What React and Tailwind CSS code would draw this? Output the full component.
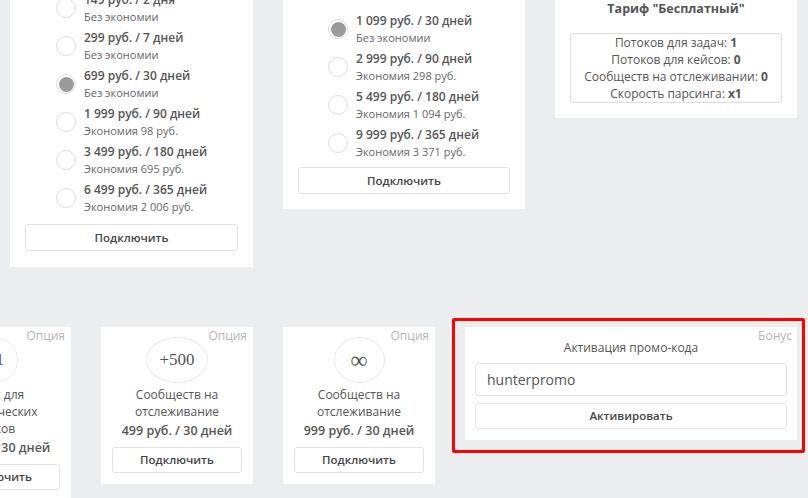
import React from "react";

function Radio({ checked }) {
  return (
    <div className="w-[20px] h-[20px] shrink-0 rounded-full border border-[#dcdcdc] bg-white flex items-center justify-center">
      {checked && <div className="w-[15px] h-[15px] rounded-full bg-[#9b9b9b]" />}
    </div>
  );
}

function Row({ title, sub, checked }) {
  return (
    <div className="flex items-center gap-[8px] h-[34px] mb-[4px]">
      <Radio checked={checked} />
      <div className="flex flex-col">
        <div className="leading-[18px] text-[12px] font-semibold text-[#555] whitespace-nowrap">{title}</div>
        <div className="leading-[16px] text-[11px] text-[#666] whitespace-nowrap">{sub}</div>
      </div>
    </div>
  );
}

function Btn({ children, className = "" }) {
  return (
    <div className={"w-full border border-[#e2e2e2] rounded-[3px] bg-white flex items-center justify-center text-[11.5px] font-semibold text-[#444] " + className}>
      {children}
    </div>
  );
}

function OptionCard({ circle, circleW, circleText = "text-[17px]", lines, price }) {
  return (
    <div className="relative w-[152px] shrink-0 bg-white px-[11px] pt-[10px] pb-[11px] flex flex-col items-center">
      <div className="absolute right-[6px] top-0 leading-[17px] text-[12px] text-[#b5b5b5]">Опция</div>
      <div className={"h-[46px] rounded-[50%] border border-[#e8e8e8] flex items-center justify-center font-['Liberation_Serif',serif] text-[#555] " + circleW + " " + circleText}>
        {circle}
      </div>
      <div className="mt-[3px] leading-[17px] text-[12px] text-center text-[#555] w-full">{lines}</div>
      <div className="mt-[2px] leading-[18px] text-[12.5px] font-semibold text-[#555] whitespace-nowrap">{price}</div>
      <Btn className="mt-[7px] h-[26px]">Подключить</Btn>
    </div>
  );
}

export default function App() {
  return (
    <div className="w-[808px] h-[498px] overflow-hidden bg-[#ecedef] font-['Open_Sans',sans-serif] text-[12px] text-[#555]">
      <div className="mt-[-40px] ml-[10px] flex items-start gap-[30px]">
        <div className="w-[243px] shrink-0 bg-white pt-[31px] pb-[16px] px-[15px]">
          <div className="pl-[31px]">
            <Row title="149 руб. / 2 дня" sub="Без экономии" />
            <Row title="299 руб. / 7 дней" sub="Без экономии" />
            <Row title="699 руб. / 30 дней" sub="Без экономии" checked />
            <Row title="1 999 руб. / 90 дней" sub="Экономия 98 руб." />
            <Row title="3 499 руб. / 180 дней" sub="Экономия 695 руб." />
            <Row title="6 499 руб. / 365 дней" sub="Экономия 2 006 руб." />
          </div>
          <Btn className="mt-[9px] h-[27px]">Подключить</Btn>
        </div>
        <div className="w-[242px] shrink-0 bg-white pt-[52px] pb-[15px] px-[15px]">
          <div className="pl-[30px]">
            <Row title="1 099 руб. / 30 дней" sub="Без экономии" checked />
            <Row title="2 999 руб. / 90 дней" sub="Экономия 298 руб." />
            <Row title="5 499 руб. / 180 дней" sub="Экономия 1 094 руб." />
            <Row title="9 999 руб. / 365 дней" sub="Экономия 3 371 руб." />
          </div>
          <Btn className="mt-[7px] h-[27px]">Подключить</Btn>
        </div>
        <div className="w-[242px] shrink-0 bg-white pt-[40px] pb-[15px] px-[15px]">
          <div className="text-center font-bold leading-[18px] text-[12.5px] text-[#555]">Тариф "Бесплатный"</div>
          <div className="mt-[15px] border border-[#dddddd] rounded-[3px] text-center leading-[17px] text-[12px] text-[#555]">
            <div>Потоков для задач: <b>1</b></div>
            <div>Потоков для кейсов: <b>0</b></div>
            <div>Сообществ на отслеживании: <b>0</b></div>
            <div>Скорость парсинга: <b>x1</b></div>
          </div>
        </div>
      </div>

      <div className="mt-[60px] ml-[-81px] flex items-start gap-[30px]">
        <OptionCard circle="+1" circleW="w-[46px]" lines={<>Поток для<br />динамических<br />кейсов</>} price="499 руб. / 30 дней" />
        <OptionCard circle="+500" circleW="w-[62px]" lines="Сообществ на отслеживание" price="499 руб. / 30 дней" />
        <OptionCard circle="∞" circleW="w-[51px]" circleText="text-[24px]" lines="Сообществ на отслеживание" price="999 руб. / 30 дней" />
        <div className="relative w-[332px] shrink-0 bg-white px-[10px] pt-[12px] pb-[11px]">
          <div className="absolute right-[5px] top-0 leading-[17px] text-[12px] text-[#b5b5b5]">Бонус</div>
          <div className="text-center leading-[17px] text-[12px] text-[#555]">Активация промо-кода</div>
          <div className="mt-[7px] h-[33px] border border-[#e0e0e0] rounded-[3px] pl-[11px] flex items-center text-[14px] text-[#555]">hunterpromo</div>
          <Btn className="mt-[7px] h-[26px]">Активировать</Btn>
          <div className="absolute left-[-13px] top-[-9px] right-[-8px] bottom-[-13px] border-[3px] border-[#ff0000] rounded-[2px]" />
        </div>
      </div>
    </div>
  );
}
